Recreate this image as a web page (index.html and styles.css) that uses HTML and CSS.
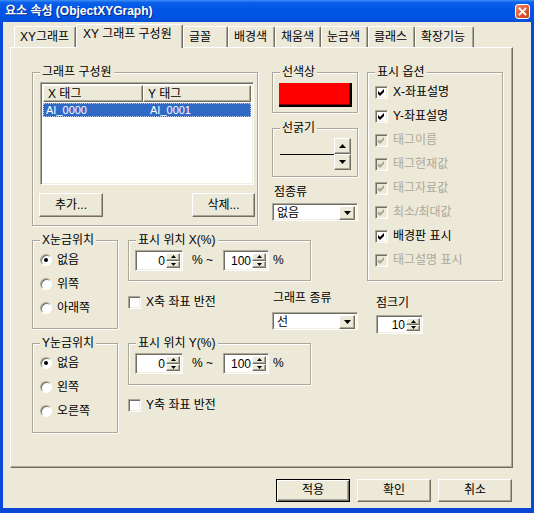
FILE: index.html
```html
<!DOCTYPE html>
<html>
<head>
<meta charset="utf-8">
<link rel="stylesheet" href="styles.css">
</head>
<body>
<div class="window">
  <div class="titlebar">
    <span class="title">요소 속성 (ObjectXYGraph)</span>
    <span class="close">
      <svg width="9" height="9" viewBox="0 0 9 9"><path d="M1.5 1.5 L7.5 7.5 M7.5 1.5 L1.5 7.5" stroke="#fff" stroke-width="1.8" stroke-linecap="square"/></svg>
    </span>
  </div>

  <div class="client">
    <div class="tabs">
      <div class="tab t1">XY그래프</div>
      <div class="tab active t2">XY 그래프 구성원</div>
      <div class="tab t3">글꼴</div>
      <div class="tab t4">배경색</div>
      <div class="tab t5">채움색</div>
      <div class="tab t6">눈금색</div>
      <div class="tab t7">클래스</div>
      <div class="tab t8">확장기능</div>
    </div>

    <div class="panel">
      <div class="left">
        <div class="top-row">
          <div class="group members">
            <div class="group-title">그래프 구성원</div>
            <div class="listview sunken">
              <div class="lv-head">
                <div class="lv-col c1 raised">X 태그</div>
                <div class="lv-col c2 raised">Y 태그</div>
              </div>
              <div class="lv-row selected">
                <span class="c1">AI_0000</span><span class="c2">AI_0001</span>
              </div>
            </div>
            <div class="members-buttons">
              <div class="btn raised add">추가...</div>
              <div class="btn raised del">삭제...</div>
            </div>
          </div>

          <div class="mid">
            <div class="group color">
              <div class="group-title">선색상</div>
              <div class="swatch"></div>
            </div>
            <div class="group thick">
              <div class="group-title">선굵기</div>
              <div class="thick-row">
                <span class="line"></span>
                <div class="updown">
                  <div class="ud-btn raised"><svg width="7" height="4" viewBox="0 0 7 4"><path d="M3.5 0 L7 4 L0 4 Z"/></svg></div>
                  <div class="ud-btn raised"><svg width="7" height="4" viewBox="0 0 7 4"><path d="M0 0 L7 0 L3.5 4 Z"/></svg></div>
                </div>
              </div>
            </div>
            <div class="label dot-type">점종류</div>
            <div class="combo sunken">
              <span class="combo-text">없음</span>
              <span class="combo-btn raised"><svg width="7" height="4" viewBox="0 0 7 4"><path d="M0 0 L7 0 L3.5 4 Z"/></svg></span>
            </div>
          </div>
        </div>

        <div class="axis-row x-row">
          <div class="group ticks">
            <div class="group-title">X눈금위치</div>
            <div class="radio-item"><span class="radio on"></span>없음</div>
            <div class="radio-item"><span class="radio"></span>위쪽</div>
            <div class="radio-item"><span class="radio"></span>아래쪽</div>
          </div>
          <div class="axis-col">
            <div class="group pos">
              <div class="group-title">표시 위치 X(%)</div>
              <div class="pos-row">
                <div class="spin sunken s1"><span class="spin-val">0</span><span class="spin-ud"><span class="mini raised"><svg width="5" height="3" viewBox="0 0 5 3"><path d="M2.5 0 L5 3 L0 3 Z"/></svg></span><span class="mini raised"><svg width="5" height="3" viewBox="0 0 5 3"><path d="M0 0 L5 0 L2.5 3 Z"/></svg></span></span></div>
                <span class="sep">% ~</span>
                <div class="spin sunken s2"><span class="spin-val">100</span><span class="spin-ud"><span class="mini raised"><svg width="5" height="3" viewBox="0 0 5 3"><path d="M2.5 0 L5 3 L0 3 Z"/></svg></span><span class="mini raised"><svg width="5" height="3" viewBox="0 0 5 3"><path d="M0 0 L5 0 L2.5 3 Z"/></svg></span></span></div>
                <span class="pct">%</span>
              </div>
            </div>
            <div class="under-row">
              <div class="check-item flip"><span class="check"></span>X축 좌표 반전</div>
              <div class="graph-type">
                <div class="label">그래프 종류</div>
                <div class="combo sunken">
                  <span class="combo-text">선</span>
                  <span class="combo-btn raised"><svg width="7" height="4" viewBox="0 0 7 4"><path d="M0 0 L7 0 L3.5 4 Z"/></svg></span>
                </div>
              </div>
            </div>
          </div>
        </div>

        <div class="axis-row y-row">
          <div class="group ticks">
            <div class="group-title">Y눈금위치</div>
            <div class="radio-item"><span class="radio on"></span>없음</div>
            <div class="radio-item"><span class="radio"></span>왼쪽</div>
            <div class="radio-item"><span class="radio"></span>오른쪽</div>
          </div>
          <div class="axis-col">
            <div class="group pos">
              <div class="group-title">표시 위치 Y(%)</div>
              <div class="pos-row">
                <div class="spin sunken s1"><span class="spin-val">0</span><span class="spin-ud"><span class="mini raised"><svg width="5" height="3" viewBox="0 0 5 3"><path d="M2.5 0 L5 3 L0 3 Z"/></svg></span><span class="mini raised"><svg width="5" height="3" viewBox="0 0 5 3"><path d="M0 0 L5 0 L2.5 3 Z"/></svg></span></span></div>
                <span class="sep">% ~</span>
                <div class="spin sunken s2"><span class="spin-val">100</span><span class="spin-ud"><span class="mini raised"><svg width="5" height="3" viewBox="0 0 5 3"><path d="M2.5 0 L5 3 L0 3 Z"/></svg></span><span class="mini raised"><svg width="5" height="3" viewBox="0 0 5 3"><path d="M0 0 L5 0 L2.5 3 Z"/></svg></span></span></div>
                <span class="pct">%</span>
              </div>
            </div>
            <div class="under-row">
              <div class="check-item flip"><span class="check"></span>Y축 좌표 반전</div>
            </div>
          </div>
        </div>
      </div>

      <div class="right">
        <div class="group options">
          <div class="group-title">표시 옵션</div>
          <div class="check-item first"><span class="check on"></span>X-좌표설명</div>
          <div class="check-item"><span class="check on"></span>Y-좌표설명</div>
          <div class="check-item disabled"><span class="check on"></span>태그이름</div>
          <div class="check-item disabled"><span class="check on"></span>태그현재값</div>
          <div class="check-item disabled"><span class="check on"></span>태그자료값</div>
          <div class="check-item disabled"><span class="check on"></span>최소/최대값</div>
          <div class="check-item"><span class="check on"></span>배경판 표시</div>
          <div class="check-item disabled"><span class="check on"></span>태그설명 표시</div>
        </div>
        <div class="label dot-size">점크기</div>
        <div class="spin sunken s3"><span class="spin-val">10</span><span class="spin-ud"><span class="mini raised"><svg width="5" height="3" viewBox="0 0 5 3"><path d="M2.5 0 L5 3 L0 3 Z"/></svg></span><span class="mini raised"><svg width="5" height="3" viewBox="0 0 5 3"><path d="M0 0 L5 0 L2.5 3 Z"/></svg></span></span></div>
      </div>
    </div>

    <div class="dialog-buttons">
      <div class="btn raised default">적용</div>
      <div class="btn raised">확인</div>
      <div class="btn raised">취소</div>
    </div>
  </div>
</div>
</body>
</html>
```

FILE: styles.css
```css
*
{
    box-sizing: border-box;
}

body
{
    margin: 0;
    background: #ECE9D8;
    font-family: "Liberation Sans", "Noto Sans CJK KR", sans-serif;
    font-size: 12px;
    line-height: 13px;
    color: #000;
}

.window
{
    width: 534px;
    height: 513px;
    display: flex;
    flex-direction: column;
}

/* title bar */
.titlebar
{
    height: 22px;
    display: flex;
    align-items: center;
    justify-content: space-between;
    padding: 0 4px 0 5px;
    background: linear-gradient(#3D8EF5 0%, #0A5FEA 12%, #0055E5 40%, #0054E3 75%, #0A4FD8 100%);
}

.title
{
    color: #fff;
    font-weight: bold;
    font-size: 12px;
    text-shadow: 1px 1px 0 #0A2A8A;
}

.close
{
    width: 15px;
    height: 15px;
    border: 1px solid #fff;
    border-radius: 3px;
    background: linear-gradient(135deg, #F08A6C, #E15A37 50%, #C8401E);
    display: flex;
    align-items: center;
    justify-content: center;
}

.client
{
    flex: 1;
    background: #ECE9D8;
    border-left: 3px solid #0A4ADB;
    border-right: 3px solid #0A4ADB;
    border-bottom: 5px solid #0A46D6;
}

/* tabs */
.tabs
{
    display: flex;
    align-items: flex-end;
    height: 23px;
    margin-top: 2px;
    padding-left: 11px;
    position: relative;
    z-index: 1;
}

.tab
{
    height: 21px;
    padding: 4px 0 0 5px;
    border-top: 1px solid #fff;
    border-left: 1px solid #fff;
    border-right: 1px solid #716F64;
    border-radius: 2px 2px 0 0;
    box-shadow: inset -1px 0 0 #ACA899;
    background: #ECE9D8;
    white-space: nowrap;
}

.tab.active
{
    height: 24px;
    margin-bottom: -1px;
    padding: 3px 0 0 6px;
}

.t1 { width: 62px; }
.t2 { width: 107px; }
.t3 { width: 45px; }
.t4 { width: 47px; }
.t5 { width: 46px; }
.t6 { width: 47px; }
.t7 { width: 47px; }
.t8 { width: 59px; }

.panel
{
    margin-left: 7px;
    width: 503px;
    height: 421px;
    border: 1px solid;
    border-color: #fff #716F64 #716F64 #fff;
    box-shadow: inset -1px -1px 0 #ACA899;
    padding: 24px 0 0 21px;
    display: flex;
}

/* shared widget looks */
.raised
{
    background: #ECE9D8;
    border: 1px solid;
    border-color: #fff #716F64 #716F64 #fff;
    box-shadow: inset -1px -1px 0 #ACA899;
}

.sunken
{
    background: #fff;
    border: 1px solid;
    border-color: #ACA899 #fff #fff #ACA899;
    box-shadow: inset 1px 1px 0 #716F64, inset -1px -1px 0 #F1EFE2;
}

.group
{
    border: 1px solid #ACA899;
    box-shadow: inset 1px 1px 0 #fff, 1px 1px 0 #fff;
    padding-left: 7px;
}

.group-title
{
    width: fit-content;
    height: 14px;
    line-height: 14px;
    margin-top: -8px;
    padding: 0 2px;
    background: #ECE9D8;
    white-space: nowrap;
}

.btn
{
    display: flex;
    align-items: center;
    justify-content: center;
    height: 23px;
}

/* left area */
.left
{
    width: 326px;
}

.top-row
{
    display: flex;
    height: 154px;
}

.members
{
    width: 226px;
    height: 154px;
}

.listview
{
    margin-top: 3px;
    width: 214px;
    height: 103px;
    padding: 2px;
}

.lv-head
{
    display: flex;
    height: 17px;
}

.lv-col
{
    height: 17px;
    padding: 2px 0 0 4px;
}

.lv-head .c1 { width: 101px; }
.lv-head .c2 { width: 109px; }

.lv-row
{
    margin-top: 1px;
    height: 14px;
    display: flex;
    font-size: 11px;
}

.lv-row.selected
{
    background: #316AC5;
    color: #fff;
    outline: 1px dotted #B8CBEF;
    outline-offset: -1px;
}

.lv-row .c1 { width: 104px; padding: 1px 0 0 3px; }
.lv-row .c2 { padding: 1px 0 0 3px; }

.members-buttons
{
    display: flex;
    justify-content: space-between;
    width: 216px;
    margin: 8px 0 0 -1px;
}

.add { width: 64px; height: 24px; }
.del { width: 63px; height: 24px; }

.mid
{
    margin-left: 14px;
    width: 86px;
}

.color
{
    height: 41px;
}

.swatch
{
    margin: 4px 0 0 -1px;
    width: 73px;
    height: 24px;
    background: #FF0000;
    border-right: 2px solid #000;
    border-bottom: 2px solid #000;
    box-shadow: inset -1px -1px 0 #8A0000;
}

.thick
{
    margin-top: 15px;
    height: 49px;
}

.thick-row
{
    display: flex;
    align-items: center;
    height: 32px;
    margin-top: 3px;
}

.line
{
    width: 54px;
    height: 1px;
    background: #000;
}

.updown
{
    width: 17px;
    height: 32px;
    display: flex;
    flex-direction: column;
}

.ud-btn
{
    height: 16px;
    display: flex;
    align-items: center;
    justify-content: center;
}

.label
{
    height: 13px;
    white-space: nowrap;
}

.dot-type
{
    margin-top: 9px;
    padding-left: 2px;
}

.combo
{
    display: flex;
    justify-content: space-between;
    width: 86px;
    height: 18px;
    padding: 2px;
}

.dot-type + .combo
{
    margin-top: 4px;
}

.combo-text
{
    padding: 1px 0 0 2px;
}

.combo-btn
{
    width: 16px;
    height: 14px;
    display: flex;
    align-items: center;
    justify-content: center;
}

/* axis rows */
.axis-row
{
    display: flex;
}

.x-row
{
    margin-top: 14px;
    height: 91px;
}

.y-row
{
    margin-top: 12px;
}

.ticks
{
    width: 86px;
    height: 89px;
}

.y-row .ticks
{
    height: 90px;
}

.radio-item,
.check-item
{
    display: flex;
    align-items: center;
    height: 24px;
    white-space: nowrap;
}

.ticks .group-title + .radio-item
{
    margin-top: 1px;
}

.radio
{
    width: 12px;
    height: 12px;
    margin-right: 5px;
    border-radius: 50%;
    background: #fff;
    border: 1px solid;
    border-color: #ACA899 #fff #fff #ACA899;
    box-shadow: inset 1px 1px 0 #716F64;
    display: flex;
    align-items: center;
    justify-content: center;
}

.radio.on::after
{
    content: "";
    width: 4px;
    height: 4px;
    border-radius: 50%;
    background: #000;
}

.axis-col
{
    margin-left: 10px;
    width: 230px;
}

.pos
{
    width: 183px;
    height: 41px;
}

.y-row .pos
{
    height: 42px;
}

.pos-row
{
    display: flex;
    align-items: center;
    height: 21px;
    margin: 3px 0 0 -1px;
}

.spin
{
    display: flex;
    height: 21px;
    padding: 2px;
}

.s1 { width: 48px; }
.s2 { width: 46px; }
.s3 { width: 47px; height: 19px; }

.spin-val
{
    flex: 1;
    text-align: right;
    padding: 2px 1px 0 0;
}

.s3 .spin-val
{
    padding-top: 1px;
}

.spin-ud
{
    width: 14px;
    display: flex;
    flex-direction: column;
}

.mini
{
    flex: 1;
    display: flex;
    align-items: center;
    justify-content: center;
}

.sep
{
    width: 40px;
    padding-left: 9px;
}

.pct
{
    margin-left: 4px;
}

.under-row
{
    display: flex;
    height: 50px;
}

.check
{
    width: 13px;
    height: 13px;
    margin-right: 5px;
    background: #fff;
    border: 1px solid;
    border-color: #ACA899 #fff #fff #ACA899;
    box-shadow: inset 1px 1px 0 #716F64, inset -1px -1px 0 #F1EFE2;
    flex: none;
}

.check.on
{
    background-image: url("data:image/svg+xml,%3Csvg xmlns='http://www.w3.org/2000/svg' width='11' height='11' viewBox='0 0 11 11'%3E%3Cpath d='M2 4 L4 6 L8 2 L8 5 L4 9 L2 7 Z' fill='%23000'/%3E%3C/svg%3E");
    background-repeat: no-repeat;
}

.disabled
{
    color: #ACA899;
}

.disabled .check
{
    background-color: #ECE9D8;
}

.disabled .check.on
{
    background-image: url("data:image/svg+xml,%3Csvg xmlns='http://www.w3.org/2000/svg' width='11' height='11' viewBox='0 0 11 11'%3E%3Cpath d='M2 4 L4 6 L8 2 L8 5 L4 9 L2 7 Z' fill='%23ACA899'/%3E%3C/svg%3E");
}

.flip
{
    height: 13px;
    margin-top: 15px;
}

.y-row .flip
{
    margin-top: 14px;
}

.graph-type
{
    margin-left: auto;
    width: 86px;
}

.graph-type .label
{
    margin-top: 11px;
    padding-left: 1px;
}

.graph-type .combo
{
    margin-top: 7px;
}

/* right column */
.right
{
    margin-left: 9px;
    width: 136px;
}

.options
{
    height: 209px;
}

.options .check-item.first
{
    margin-top: 1px;
}

.dot-size
{
    margin: 16px 0 0 9px;
}

.s3
{
    margin: 5px 0 0 9px;
}

/* bottom buttons */
.dialog-buttons
{
    display: flex;
    justify-content: flex-end;
    gap: 7px;
    margin-top: 11px;
    padding-right: 19px;
}

.dialog-buttons .btn
{
    width: 74px;
}

.btn.default
{
    border: 1px solid #000;
    box-shadow: inset 1px 1px 0 #fff, inset -1px -1px 0 #716F64, inset -2px -2px 0 #ACA899;
}
```
